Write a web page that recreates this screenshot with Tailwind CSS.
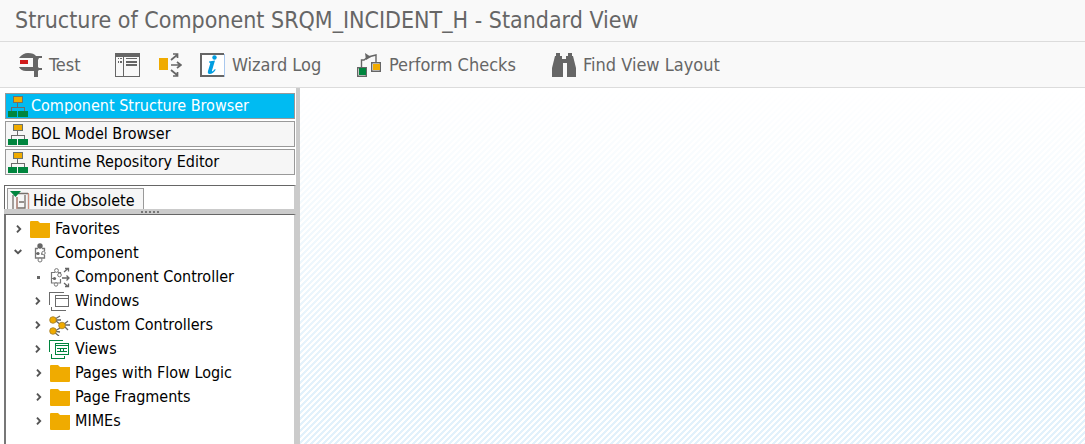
<!DOCTYPE html>
<html lang="en">
<head>
<meta charset="utf-8">
<meta name="viewport" content="width=device-width, initial-scale=1">
<title>Structure of Component</title>
<script src="https://cdn.jsdelivr.net/npm/@tailwindcss/browser@4"></script>
</head>
<body class="flex h-screen flex-col overflow-hidden bg-white font-['DejaVu_Sans_Condensed','Noto_Sans',sans-serif] text-[16px] text-black">
<svg class="hidden">
  <symbol id="tree" viewBox="0 0 20 21" shape-rendering="crispEdges">
    <path d="M9.5 7v4M3.5 15v-3.500h13v3.500" fill="none" stroke="#6b6b6b" stroke-width="1"/>
    <path d="M5 0h10v7H5z" fill="#6b7370"/><path d="M6 1h8v5H6z" fill="#f0ab00"/>
    <path d="M0 15h9v6H0zM10 15h10v6H10z" fill="#00853e"/>
  </symbol>
  <symbol id="folder" viewBox="0 0 21 17"><path d="M1 0h7l2 2h10v14q0 1-1 1H1q-1 0-1-1V1q0-1 1-1z" fill="#f0ab00"/></symbol>
  <symbol id="chev" viewBox="0 0 6 8"><path d="M1 .7l3.200 3.300L1 7.300" fill="none" stroke="#555" stroke-width="1.900"/></symbol>
</svg>

<header class="flex h-[42px] shrink-0 items-center border-b border-[#dcdcdc] bg-[#f9f9f9] px-[15px]">
  <h1 class="whitespace-nowrap text-[23px] leading-none text-[#666]">Structure of Component SRQM_INCIDENT_H - Standard View</h1>
</header>

<nav class="flex h-[46px] shrink-0 items-center border-b border-[#dcdcdc] bg-[#f9f9f9] pl-[19px] text-[18px] whitespace-nowrap text-[#666]" aria-label="Toolbar">
  <button class="flex w-24 items-center gap-[7px]">
    <svg class="h-6 w-[23px]" viewBox="0 0 23 24" fill="#666"><path d="M0 5Q4 0 9 0q6 0 8 3h6v2h-3l-1 2v7l1 1h3v2h-3l-1 1v6h-4v-6H7q-5 0-7-4h14V5z"/><path d="M1 7h8v4H1z" fill="#d01c1c"/></svg>Test
  </button>
  <button class="w-11" aria-label="Show navigation">
    <svg class="h-6 w-[25px]" viewBox="0 0 25 24" shape-rendering="crispEdges"><path d="M0 0h25v24H0z" fill="#666"/><path d="M1 4h7v19H1zM9 4h15v19H9z" fill="#f9f9f9"/><path d="M3 5h1v1H3zM5 5h2v1H5zM3 8h1v2H3zM5 8h2v2H5zM11 5h11v1H11zM11 8h11v2H11zM11 11h11v2H11z" fill="#666"/></svg>
  </button>
  <button class="w-[41px]" aria-label="Where used">
    <svg class="h-6 w-[23px]" viewBox="0 0 23 24"><path d="M0 5h9v12H0z" fill="#f0ab00"/><path d="M12 7l6-5M12 12h9M12 17l6 5M14 1h4.500v4M18 9l4 3-4 3M14 23h4.500v-4" fill="none" stroke="#666" stroke-width="1.700"/></svg>
  </button>
  <button class="flex w-[157px] items-center gap-[7px]">
    <svg class="h-6 w-[25px]" viewBox="0 0 25 24"><path d="M0 0h25v24H0z" fill="#fff"/><path d="M1 24V1h23M1 23h23" fill="none" stroke="#666" stroke-width="2"/><path d="M24.500 1v23" stroke="#a9c8ee"/><path d="M9 8.500l6-1-3 10q-.4 1.500 1 .6l2-2 .7.600q-3 4.300-6 4.300-2.500 0-1.700-3l2.200-7.300q.3-1.200-1.200-1.200z" fill="#009de0"/><circle cx="14.500" cy="4.500" r="2.200" fill="#009de0"/></svg>Wizard Log
  </button>
  <button class="flex w-[195px] items-center gap-2">
    <svg class="h-6 w-6" viewBox="0 0 24 24"><path d="M4.500 14V7H7L11 4l8-2v8" fill="none" stroke="#666" stroke-width="1.400"/><path d="M8 0l6 4-5 3z" fill="#666"/><path d="M.7 14.700h8.600v8.600H.7zM14.700 9.700h8.600v8.600h-8.600z" fill="#fff" stroke="#666" stroke-width="1.400"/><path d="M2 15h7v7H2z" fill="#00853e"/><path d="M16 11h7v6h-7z" fill="#f0ab00"/></svg>Perform Checks
  </button>
  <button class="flex items-center gap-[7px]">
    <svg class="h-6 w-6" viewBox="0 0 24 24" fill="#666"><path d="M4 0h4v3h2v3h4V3h2V0h4v3h1l3 12v9h-9V10h-4v14H0v-9L3 3h1z"/></svg>Find View Layout
  </button>
</nav>

<main class="flex min-h-0 flex-1">
  <aside class="flex w-[300px] shrink-0 flex-col border-r-4 border-[#cbcbcb] pl-[5px] whitespace-nowrap">
    <div class="mr-px mt-[5px] flex flex-col gap-[2px]">
      <button class="flex h-[26px] items-center gap-[3px] border border-[#999] bg-[#00bbf2] pl-[2px] text-white"><svg class="h-[21px] w-5"><use href="#tree"/></svg>Component Structure Browser</button>
      <button class="flex h-[26px] items-center gap-[3px] border border-[#999] bg-[#f6f6f6] pl-[2px]"><svg class="h-[21px] w-5"><use href="#tree"/></svg>BOL Model Browser</button>
      <button class="flex h-[26px] items-center gap-[3px] border border-[#999] bg-[#f6f6f6] pl-[2px]"><svg class="h-[21px] w-5"><use href="#tree"/></svg>Runtime Repository Editor</button>
    </div>
    <div class="-ml-px mt-[10px] h-6 shrink-0 overflow-hidden border-t border-r-2 border-l border-t-[#666] border-r-[#cbcbcb] border-l-[#666] pt-[2px] pl-[2px]">
      <button class="flex h-[26px] items-center gap-[3px] border border-[#999] bg-[#f6f6f6] pr-2 pl-[2px]">
        <svg class="h-5 w-5" viewBox="0 0 20 20"><path d="M3 4v15M18.500 3v16M8 2.500h10M7 6v11h8V4M9 11h5" fill="none" stroke="#76706b" stroke-width="1.300"/><path d="M18.500 2v18M7 6v12" stroke="#d09080"/><path d="M0 0h11L5.500 6z" fill="#00853e"/></svg>Hide Obsolete
      </button>
    </div>
    <div class="-ml-px flex h-[5px] shrink-0 items-center justify-center bg-[#cbcbcb]"><span class="w-[18px] border-t-2 border-dotted border-[#777]"></span></div>
    <ul class="-ml-px flex-1 border-t border-r-2 border-l-2 border-t-[#666] border-r-[#cbcbcb] border-l-[#777] pt-[2px]">
      <li class="flex h-6 items-center pl-[10px]"><svg class="mr-2 h-2 w-[6px]"><use href="#chev"/></svg><svg class="mr-[4px] h-[17px] w-[21px]"><use href="#folder"/></svg>Favorites</li>
      <li class="flex h-6 items-center pl-2"><svg class="mr-[11px] h-2 w-2" viewBox="0 0 8 8"><path d="M.7 1L4 4.200 7.300 1" fill="none" stroke="#555" stroke-width="1.900"/></svg><svg class="mr-[8px] h-5 w-[14px]" viewBox="0 0 14 20"><path d="M5 5.500H2.500V15h9v-3M9 5.500h2.500V8M2 10.500h4M8 11h3" fill="none" stroke="#777" stroke-width="1.300"/><circle cx="7" cy="3" r="2.700" fill="#666"/><circle cx="5" cy="10.500" r="1.600" fill="#666"/><circle cx="10.500" cy="10" r="1.700" fill="#fff" stroke="#777"/><circle cx="7" cy="17" r="2" fill="#fff" stroke="#777"/></svg>Component</li>
      <li class="flex h-6 items-center pl-[31px]"><span class="mr-[10px] size-[3px] bg-[#666]"></span><svg class="mr-[4px] h-[21px] w-[21px]" viewBox="0 0 21 21"><path d="M5 5.500H1.500V16h9v-4M8 5.500h2.500V8M1 11.500h4" fill="none" stroke="#777" stroke-width="1.200"/><circle cx="6.500" cy="3.500" r="1.900" fill="#fff" stroke="#777"/><circle cx="6" cy="17.500" r="1.700" fill="#fff" stroke="#777"/><circle cx="4.500" cy="11.500" r="1.600" fill="#666"/><circle cx="9.500" cy="8" r="1.800" fill="#fff" stroke="#777"/><path d="M14 5l4-3.500M15 1.500h3.500v3M12 11h7M16.500 8.500L19 11l-2.500 2.500M14 16l4 3.500M15 19.500h3.500v-3" fill="none" stroke="#666" stroke-width="1.300"/></svg>Component Controller</li>
      <li class="flex h-6 items-center pl-[29px]"><svg class="mr-2 h-2 w-[6px]"><use href="#chev"/></svg><svg class="mr-[5px] h-[21px] w-[21px]" viewBox="0 0 21 21" fill="none" stroke="#6b6b6b" shape-rendering="crispEdges"><path d="M0 1.500h15M.5 1v13M2.500 16v3.500H17M6.500 4.500h13v11h-13zM6.500 7.500h13"/></svg>Windows</li>
      <li class="flex h-6 items-center pl-[29px]"><svg class="mr-2 h-2 w-[6px]"><use href="#chev"/></svg><svg class="mr-[5px] h-[21px] w-[21px]" viewBox="0 0 21 21"><path d="M6 4l5-3M6 5h6M7 6l5 4M14 10l5-4M14 10h7M15 11l4 4M6 16l5-3M5 16l6 1M5 17l5 4" fill="none" stroke="#666" stroke-width="1.300"/><g fill="#f0ab00" stroke="#a17c2c" stroke-width=".8"><circle cx="4" cy="5" r="3.300"/><circle cx="13" cy="10.500" r="3.300"/><circle cx="4" cy="16" r="3.300"/></g></svg>Custom Controllers</li>
      <li class="flex h-6 items-center pl-[29px]"><svg class="mr-2 h-2 w-[6px]"><use href="#chev"/></svg><svg class="mr-[5px] h-[21px] w-[21px]" viewBox="0 0 21 21" fill="none" stroke="#00853e" shape-rendering="crispEdges"><path d="M0 1.500h14M.5 1v12M2.500 15v4.500H15M15.500 17v3M6.500 4.500h13v11h-13zM6 6.500h14M8 9.500h3M12 9.500h2M15 9.500h3M8 12.500h10M11.500 9v4M14.500 9v4"/></svg>Views</li>
      <li class="flex h-6 items-center pl-[30px]"><svg class="mr-2 h-2 w-[6px]"><use href="#chev"/></svg><svg class="mr-[4px] h-[17px] w-[21px]"><use href="#folder"/></svg>Pages with Flow Logic</li>
      <li class="flex h-6 items-center pl-[30px]"><svg class="mr-2 h-2 w-[6px]"><use href="#chev"/></svg><svg class="mr-[4px] h-[17px] w-[21px]"><use href="#folder"/></svg>Page Fragments</li>
      <li class="flex h-6 items-center pl-[30px]"><svg class="mr-2 h-2 w-[6px]"><use href="#chev"/></svg><svg class="mr-[4px] h-[17px] w-[21px]"><use href="#folder"/></svg>MIMEs</li>
    </ul>
  </aside>
  <section class="flex-1 bg-[linear-gradient(to_bottom,#fff,#ffffff00_85%),linear-gradient(135deg,#e2f1fb_25%,#fff_25%,#fff_50%,#e2f1fb_50%,#e2f1fb_75%,#fff_75%)] bg-[length:100%_100%,6px_6px]" aria-label="Work area"></section>
</main>
</body>
</html>
